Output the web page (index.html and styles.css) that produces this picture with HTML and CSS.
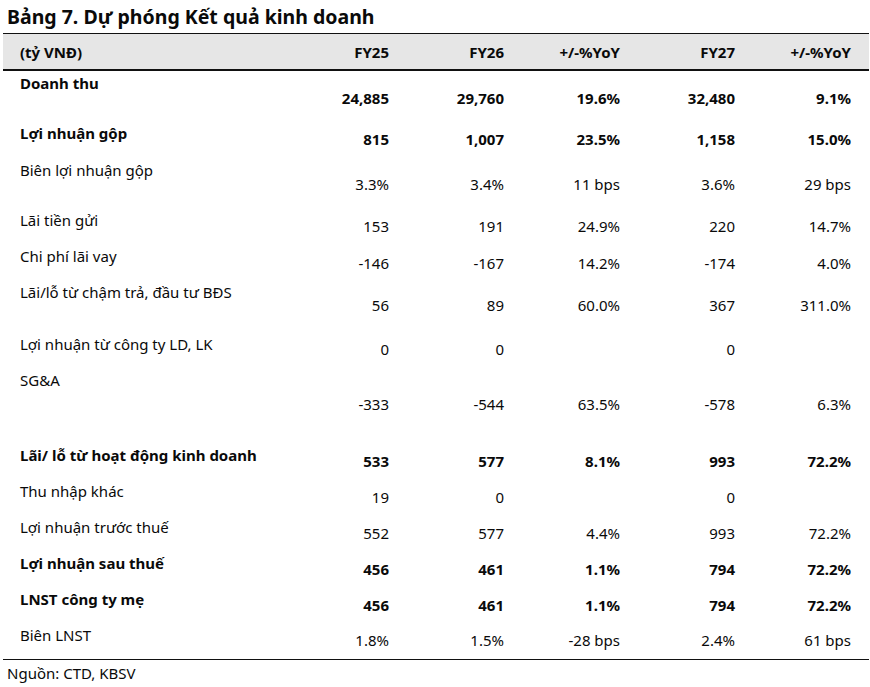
FILE: index.html
```html
<!DOCTYPE html>
<html lang="vi">
<head>
<meta charset="utf-8">
<title>Bảng 7</title>
<link rel="stylesheet" href="styles.css">
</head>
<body>
<div class="page">
  <h1 class="title">Bảng 7. Dự phóng Kết quả kinh doanh</h1>
  <div class="table">
    <div class="row head">
      <div class="lbl">(tỷ VNĐ)</div><div>FY25</div><div>FY26</div><div>+/-%YoY</div><div>FY27</div><div>+/-%YoY</div>
    </div>
    <div class="row bold h50 d15">
      <div class="lbl">Doanh thu</div><div>24,885</div><div>29,760</div><div>19.6%</div><div>32,480</div><div>9.1%</div>
    </div>
    <div class="row bold h37 d6">
      <div class="lbl">Lợi nhuận gộp</div><div>815</div><div>1,007</div><div>23.5%</div><div>1,158</div><div>15.0%</div>
    </div>
    <div class="row h50 d14">
      <div class="lbl">Biên lợi nhuận gộp</div><div>3.3%</div><div>3.4%</div><div>11 bps</div><div>3.6%</div><div>29 bps</div>
    </div>
    <div class="row h36 d6">
      <div class="lbl">Lãi tiền gửi</div><div>153</div><div>191</div><div>24.9%</div><div>220</div><div>14.7%</div>
    </div>
    <div class="row h36 d7">
      <div class="lbl">Chi phí lãi vay</div><div>-146</div><div>-167</div><div>14.2%</div><div>-174</div><div>4.0%</div>
    </div>
    <div class="row h52 d13">
      <div class="lbl">Lãi/lỗ từ chậm trả, đầu tư BĐS</div><div>56</div><div>89</div><div>60.0%</div><div>367</div><div>311.0%</div>
    </div>
    <div class="row h36 d5">
      <div class="lbl">Lợi nhuận từ công ty LD, LK</div><div>0</div><div>0</div><div></div><div>0</div><div></div>
    </div>
    <div class="row h75 d24">
      <div class="lbl">SG&amp;A</div><div>-333</div><div>-544</div><div>63.5%</div><div>-578</div><div>6.3%</div>
    </div>
    <div class="row bold h36 d6">
      <div class="lbl">Lãi/ lỗ từ hoạt động kinh doanh</div><div>533</div><div>577</div><div>8.1%</div><div>993</div><div>72.2%</div>
    </div>
    <div class="row h36 d6">
      <div class="lbl">Thu nhập khác</div><div>19</div><div>0</div><div></div><div>0</div><div></div>
    </div>
    <div class="row h36 d6">
      <div class="lbl">Lợi nhuận trước thuế</div><div>552</div><div>577</div><div>4.4%</div><div>993</div><div>72.2%</div>
    </div>
    <div class="row bold h36 d6">
      <div class="lbl">Lợi nhuận sau thuế</div><div>456</div><div>461</div><div>1.1%</div><div>794</div><div>72.2%</div>
    </div>
    <div class="row bold h36 d6">
      <div class="lbl">LNST công ty mẹ</div><div>456</div><div>461</div><div>1.1%</div><div>794</div><div>72.2%</div>
    </div>
    <div class="row h36 d5 last">
      <div class="lbl">Biên LNST</div><div>1.8%</div><div>1.5%</div><div>-28 bps</div><div>2.4%</div><div>61 bps</div>
    </div>
  </div>
  <p class="source">Nguồn: CTD, KBSV</p>
</div>
</body>
</html>
```

FILE: styles.css
```css
* { box-sizing: border-box; }
html, body { margin: 0; padding: 0; background: #fff; }
body {
  font-family: "Noto Sans", "Open Sans", sans-serif;
  color: #0a0a0a;
  width: 870px;
  height: 687px;
  overflow: hidden;
}
.page { width: 870px; }
.title {
  margin: 0;
  padding-left: 7px;
  height: 33px;
  line-height: 33px;
  font-size: 19.5px;
  font-weight: 700;
  color: #0a0a0a;
}
.table {
  margin-left: 3px;
  width: 866px;
  border-bottom: 1px solid #111;
}
.row {
  display: grid;
  grid-template-columns: 286px 100px 115px 116px 115px 116px;
  padding-right: 15px;
  font-size: 15px;
  line-height: 18px;
}
.row > div { text-align: right; white-space: nowrap; }
.row > .lbl { text-align: left; padding-left: 17px; padding-top: 3px; }
.head {
  border-top: 1px solid #111;
  border-bottom: 2px solid #111;
  background: #e6e6e6;
  height: 38px;
  align-items: center;
  font-weight: 700;
}
.head > .lbl { padding-top: 0; }
.bold { font-weight: 700; }
.h36 { height: 36px; }
.h37 { height: 37px; }
.h50 { height: 50px; }
.h52 { height: 52px; }
.h75 { height: 75px; }
.d5 > div:not(.lbl) { padding-top: 8px; }
.d6 > div:not(.lbl) { padding-top: 9px; }
.d7 > div:not(.lbl) { padding-top: 10px; }
.d13 > div:not(.lbl) { padding-top: 16px; }
.d14 > div:not(.lbl) { padding-top: 17px; }
.d15 > div:not(.lbl) { padding-top: 18px; }
.d24 > div:not(.lbl) { padding-top: 27px; }
.source {
  margin: 0;
  padding-left: 7px;
  padding-top: 3px;
  font-size: 15px;
  line-height: 20px;
}
```
